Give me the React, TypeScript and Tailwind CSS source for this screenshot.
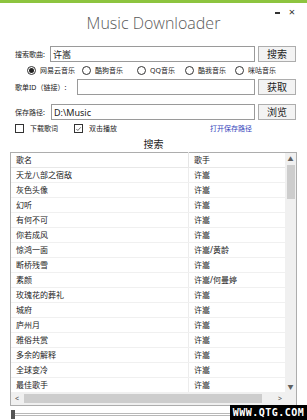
import React from 'react';

const songs: [string, string][] = [
    ['天龙八部之宿敌', '许嵩'],
    ['灰色头像', '许嵩'],
    ['幻听', '许嵩'],
    ['有何不可', '许嵩'],
    ['你若成风', '许嵩'],
    ['惊鸿一面', '许嵩/黄龄'],
    ['断桥残雪', '许嵩'],
    ['素颜', '许嵩/何曼婷'],
    ['玫瑰花的葬礼', '许嵩'],
    ['城府', '许嵩'],
    ['庐州月', '许嵩'],
    ['雅俗共赏', '许嵩'],
    ['多余的解释', '许嵩'],
    ['全球变冷', '许嵩'],
    ['最佳歌手', '许嵩'],
];

// label + width of each radio slot
const sources: [string, string][] = [
    ['网易云音乐', 'w-[55px]'],
    ['酷狗音乐', 'w-[55px]'],
    ['QQ音乐', 'w-[48px]'],
    ['酷我音乐', 'w-[50px]'],
    ['咪咕音乐', 'w-[50px]'],
];

function Btn({ label }: { label: string }) {
    return (
        <button className="flex h-[16px] w-[38px] items-center justify-center border border-[#adadad] bg-[#f3f3f3] text-[10px] leading-none text-[#222]">
            {label}
        </button>
    );
}

function Field({ value }: { value?: string }) {
    return (
        <div className="flex h-[16px] flex-1 items-center border border-[#9a9a9a] bg-white px-[2px] text-[9px] leading-none text-[#222]">
            {value}
        </div>
    );
}

export default function App() {
    return (
        <div
            className="relative flex h-[420px] w-[307px] flex-col overflow-hidden bg-white text-[#222]"
            style={{ fontFamily: '"Noto Sans", "Noto Sans CJK SC", sans-serif' }}
        >
            {/* green top strip */}
            <div className="h-[3px] bg-[#8dc43f]" />

            {/* title bar */}
            <div className="relative flex h-[46px] items-center justify-center pb-[2px]">
                <span className="text-[16px] font-light text-[#5a5a5a]" style={{ fontFamily: '"Open Sans", sans-serif' }}>
                    Music Downloader
                </span>
                <div className="absolute right-[12px] top-[3px] flex items-start gap-[9px] text-[#333]">
                    <span className="mt-[6px] block h-[2px] w-[5px] bg-[#333]" />
                    <span className="text-[11px] leading-none">×</span>
                </div>
            </div>

            {/* search row */}
            <div className="flex items-center pl-[15px] pr-[11px]">
                <span className="w-[35px] text-[7px] leading-none">搜索歌曲:</span>
                <Field value="许嵩" />
                <div className="ml-[3px]">
                    <Btn label="搜索" />
                </div>
            </div>

            {/* source radios */}
            <div className="mt-[3px] flex h-[12px] items-center pl-[27px] text-[7px] leading-none">
                {sources.map(([s, w], i) => (
                    <div key={s} className={`${w} flex items-center gap-[4px]`}>
                        <span className="flex h-[9px] w-[9px] items-center justify-center rounded-full border border-[#333]">
                            {i === 0 && <span className="h-[5px] w-[5px] rounded-full bg-[#222]" />}
                        </span>
                        <span>{s}</span>
                    </div>
                ))}
            </div>

            {/* playlist row */}
            <div className="mt-[3px] flex items-center pl-[15px] pr-[11px]">
                <span className="w-[62px] text-[7px] leading-none">歌单ID（链接）:</span>
                <Field />
                <div className="ml-[3px]">
                    <Btn label="获取" />
                </div>
            </div>

            {/* save path */}
            <div className="mt-[9px] flex items-center pl-[15px] pr-[11px]">
                <span className="w-[36px] text-[7px] leading-none">保存路径:</span>
                <Field value="D:\Music" />
                <div className="ml-[3px]">
                    <Btn label="浏览" />
                </div>
            </div>

            {/* options */}
            <div className="mt-[3px] flex h-[11px] items-center pl-[15px] pr-[55px] text-[7px] leading-none">
                <span className="h-[9px] w-[9px] border border-[#333]" />
                <span className="ml-[6px]">下载歌词</span>
                <span className="ml-[16px] flex h-[9px] w-[9px] items-center justify-center border border-[#333]">
                    <svg viewBox="0 0 10 10" className="h-[8px] w-[8px]">
                        <path d="M2 5 L4 7.2 L8.2 2.6" fill="none" stroke="#333" strokeWidth="1" />
                    </svg>
                </span>
                <span className="ml-[6px]">双击播放</span>
                <span className="ml-auto text-[#3344bb]">打开保存路径</span>
            </div>

            <div className="mt-[3px] flex h-[16px] items-center justify-center text-[10px] leading-none">搜索</div>

            {/* result table */}
            <div className="mx-[10px] flex h-[256px] flex-col border border-[#adadad] text-[8px] leading-none">
                <div className="flex min-h-0 flex-1">
                    <div className="flex flex-1 flex-col">
                        <div className="flex h-[15px] items-center border-b border-[#e8e8e8]">
                            <span className="w-[178px] border-r border-[#e5e5e5] pl-[5px] leading-[15px]">歌名</span>
                            <span className="pl-[5px]">歌手</span>
                        </div>
                        {songs.map(([n, a]) => (
                            <div key={n} className="flex h-[15px] items-center border-b border-[#f0f0f0]">
                                <span className="w-[178px] border-r border-[#ececec] pl-[5px] leading-[14px]">{n}</span>
                                <span className="pl-[5px]">{a}</span>
                            </div>
                        ))}
                    </div>
                    {/* vertical scrollbar */}
                    <div className="flex w-[11px] flex-col items-center bg-[#f0f0f0]">
                        <span className="flex h-[12px] items-center text-[6px] text-[#606060]">▲</span>
                        <div className="h-[34px] w-[8px] bg-[#cdcdcd]" />
                        <div className="flex-1" />
                        <span className="flex h-[12px] items-center text-[6px] text-[#606060]">▼</span>
                    </div>
                </div>
                {/* horizontal scrollbar */}
                <div className="flex h-[12px] items-center bg-[#f0f0f0] text-[7px] text-[#505050]">
                    <span className="w-[13px] pl-[4px]">&lt;</span>
                    <div className="h-[9px] w-[238px] bg-[#cdcdcd]" />
                    <span className="ml-auto w-[21px] pl-[3px]">&gt;</span>
                </div>
            </div>

            {/* progress slider */}
            <div className="mt-[3px] flex h-[12px] items-center pl-[11px]">
                <span className="h-[9px] w-[4px] bg-[#555]" />
                <div className="h-[3px] flex-1 border-y border-[#b8b8b8]" />
            </div>

            {/* watermark */}
            <div className="absolute bottom-0 right-0 flex h-[15px] w-[77px] items-center justify-center bg-black text-[10px] font-bold tracking-[0.5px] text-white" style={{ fontFamily: '"DejaVu Sans Mono", monospace' }}>
                WWW.QTG.COM
            </div>
        </div>
    );
}
